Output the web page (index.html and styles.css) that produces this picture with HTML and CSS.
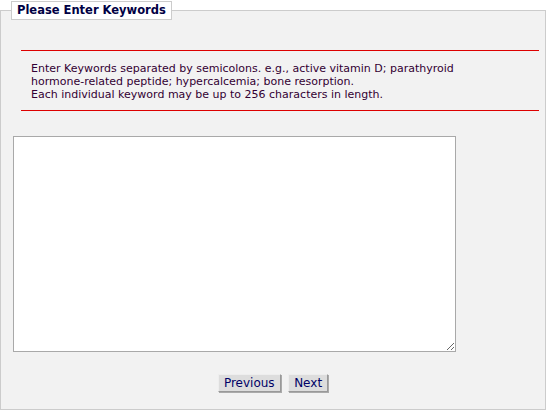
FILE: index.html
```html
<!DOCTYPE html>
<html lang="en">
<head>
  <meta charset="UTF-8" />
  <title>Please Enter Keywords</title>
  <link rel="stylesheet" href="styles.css">
</head>
<body>
  <fieldset class="panel">
    <legend>Please Enter Keywords</legend>

    <div class="instructions">
      <p>Enter Keywords separated by semicolons. e.g., active vitamin D; parathyroid hormone-related peptide; hypercalcemia; bone resorption.<br>
      Each individual keyword may be up to 256 characters in length.</p>
    </div>

    <textarea id="keywords" class="keywords"></textarea>

    <div class="buttons">
      <button type="button">Previous</button>
      <button type="button">Next</button>
    </div>
  </fieldset>
</body>
</html>
```

FILE: styles.css
```css
body { margin: 0; padding-top: 1px; background: #fff; font-family: "DejaVu Sans", Verdana, sans-serif; font-size: 11px; }
.panel { margin: 0; padding: 0 0 16px 0; height: 409px; box-sizing: border-box; border: 1px solid #cccccc; background: #f2f2f2; }
.panel legend { margin-left: 10px; padding: 1px 5px 2px 5px; border: 1px solid #cccccc; background: #fff; font-size: 11.5px; font-weight: bold; color: #000044; }
.instructions { margin: 30px 6px 0 20px; padding: 11px 60px 9px 10px; border-top: 1px solid #dd0000; border-bottom: 1px solid #dd0000; }
.instructions p { margin: 0; line-height: 13px; color: #330033; }
.keywords { display: block; margin: 25px 0 0 12px; width: 443px; height: 216px; box-sizing: border-box; border: 1px solid #a9a9a9; background: #fff; resize: both; }
.buttons { margin-top: 22px; text-align: center; }
.buttons button { margin: 0 2px; padding: 1px 5px; font-family: "DejaVu Sans", Verdana, sans-serif; font-size: 12px; color: #000066; background: #dddddd; border: 1px solid; border-color: #eeeeee #999999 #999999 #eeeeee; box-shadow: 1px 1px 0 #aaaaaa; }
```
